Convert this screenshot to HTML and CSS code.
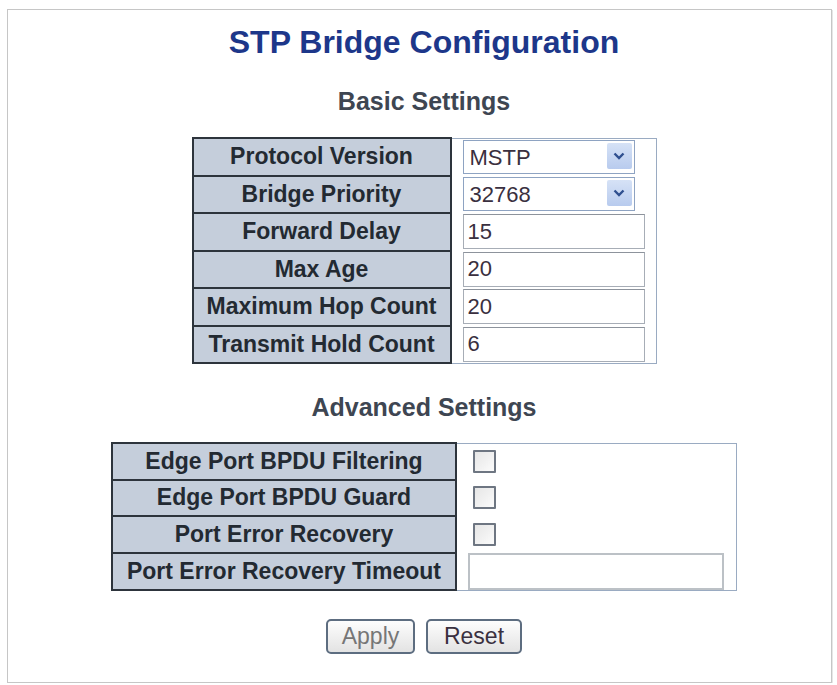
FILE: index.html
```html
<!DOCTYPE html>
<html>
<head>
<meta charset="utf-8">
<title>STP Bridge Configuration</title>
<link rel="stylesheet" href="styles.css">
</head>
<body>
<div class="frame">
  <div class="content">
    <h1 class="title">STP Bridge Configuration</h1>
    <h2 class="section">Basic Settings</h2>
    <table class="config basic">
      <tr>
        <th>Protocol Version</th>
        <td>
          <span class="sel">
            <select class="select"><option>MSTP</option></select>
            <span class="arrow"><svg width="12" height="8" viewBox="0 0 12 8"><path d="M1.5 1.5 L6 6 L10.5 1.5" fill="none" stroke="#2f4f8f" stroke-width="2.4"/></svg></span>
          </span>
        </td>
      </tr>
      <tr>
        <th>Bridge Priority</th>
        <td>
          <span class="sel">
            <select class="select"><option>32768</option></select>
            <span class="arrow"><svg width="12" height="8" viewBox="0 0 12 8"><path d="M1.5 1.5 L6 6 L10.5 1.5" fill="none" stroke="#2f4f8f" stroke-width="2.4"/></svg></span>
          </span>
        </td>
      </tr>
      <tr><th>Forward Delay</th><td><input class="text" type="text" value="15"></td></tr>
      <tr><th>Max Age</th><td><input class="text" type="text" value="20"></td></tr>
      <tr><th>Maximum Hop Count</th><td><input class="text" type="text" value="20"></td></tr>
      <tr><th>Transmit Hold Count</th><td><input class="text" type="text" value="6"></td></tr>
    </table>
    <h2 class="section adv-title">Advanced Settings</h2>
    <table class="config advanced">
      <tr><th>Edge Port BPDU Filtering</th><td><input class="check" type="checkbox"></td></tr>
      <tr><th>Edge Port BPDU Guard</th><td><input class="check" type="checkbox"></td></tr>
      <tr><th>Port Error Recovery</th><td><input class="check" type="checkbox"></td></tr>
      <tr><th>Port Error Recovery Timeout</th><td><input class="text wide" type="text" value=""></td></tr>
    </table>
    <div class="buttons">
      <button class="btn apply" type="button">Apply</button>
      <button class="btn reset" type="button">Reset</button>
    </div>
  </div>
</div>
</body>
</html>
```

FILE: styles.css
```css
body {
  margin: 0;
  background: #ffffff;
  font-family: "Liberation Sans", Arial, sans-serif;
}

.frame {
  margin: 9px 5px 0 7px;
  height: 674px;
  box-sizing: border-box;
  border: 1px solid #c6c6c6;
  box-shadow: 1px 1px 0 #e6e6e6;
}

.content {
  padding-left: 9px;
  display: flex;
  flex-direction: column;
  align-items: center;
}

.title {
  margin: 14px 0 0;
  font-size: 32px;
  line-height: 36px;
  font-weight: bold;
  color: #1d378a;
}

.section {
  margin: 26px 0 0;
  font-size: 25px;
  line-height: 30px;
  font-weight: bold;
  color: #3e4652;
}

.adv-title {
  margin-top: 28px;
}

.config {
  border-collapse: collapse;
  border: 1px solid #9aabc2;
  margin-top: 21px;
}

.config th {
  background: #c5cedb;
  border: 2px solid #2d343c;
  font-size: 23px;
  font-weight: bold;
  color: #232a32;
  padding: 0;
  text-align: center;
  white-space: nowrap;
}

.config td {
  padding: 0;
  vertical-align: middle;
}

.basic {
  width: 465px;
}

.basic th {
  width: 256px;
}

.basic tr {
  height: 37.5px;
}

.basic td {
  padding-left: 11px;
}

.advanced {
  width: 626px;
  margin-top: 20px;
}

.advanced th {
  width: 342px;
}

.advanced tr {
  height: 36.5px;
}

.advanced td {
  padding-left: 11px;
}

.sel {
  position: relative;
  display: inline-block;
  vertical-align: middle;
}

.select {
  display: block;
  appearance: none;
  -webkit-appearance: none;
  width: 172px;
  height: 34px;
  box-sizing: border-box;
  border: 1px solid #8ea3c2;
  background: #ffffff;
  font-family: "Liberation Sans", Arial, sans-serif;
  font-size: 22px;
  color: #3a3040;
  padding: 0 0 0 6px;
  margin: 0;
  border-radius: 0;
}

.arrow {
  position: absolute;
  right: 3px;
  top: 3px;
  width: 25px;
  height: 26px;
  border-radius: 2px;
  background: linear-gradient(#d6e2f6, #b8cbee);
  display: flex;
  align-items: center;
  justify-content: center;
  pointer-events: none;
}

.text {
  display: block;
  width: 182px;
  height: 35px;
  box-sizing: border-box;
  border: 1px solid #a7adb6;
  border-top-color: #8d939c;
  font-family: "Liberation Sans", Arial, sans-serif;
  font-size: 22px;
  color: #3a3040;
  padding: 0 0 0 4px;
  margin: 0;
  background: #ffffff;
}

.text.wide {
  width: 256px;
  height: 37px;
  border: 2px solid #bcc1c6;
}

.check {
  appearance: none;
  -webkit-appearance: none;
  display: block;
  width: 23px;
  height: 23px;
  box-sizing: border-box;
  margin: 0 0 0 5px;
  border: 2px solid #6e7682;
  border-radius: 1px;
  background: linear-gradient(135deg, #e6e6e6, #fbfbfb);
}

.buttons {
  margin-top: 28px;
  display: flex;
  gap: 11px;
}

.btn {
  height: 35px;
  box-sizing: border-box;
  border: 2px solid #5d6d80;
  border-radius: 5px;
  background: linear-gradient(#fdfdfd, #e3e3e3);
  font-family: "Liberation Sans", Arial, sans-serif;
  font-size: 23px;
  padding: 0;
  line-height: 1;
}

.apply {
  width: 89px;
  color: #767676;
}

.reset {
  width: 96px;
  color: #3a3040;
}
```
